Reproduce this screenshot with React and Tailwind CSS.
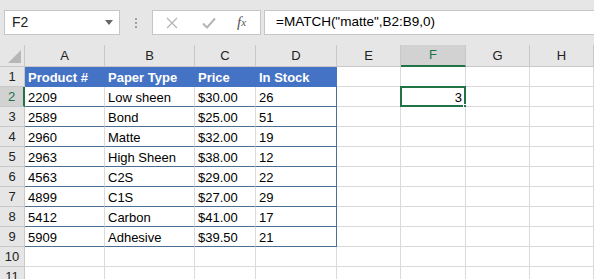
import React from 'react';

const cols = ['A', 'B', 'C', 'D', 'E', 'F', 'G', 'H'];

const data = [
  ['2209', 'Low sheen', '$30.00', '26'],
  ['2589', 'Bond', '$25.00', '51'],
  ['2960', 'Matte', '$32.00', '19'],
  ['2963', 'High Sheen', '$38.00', '12'],
  ['4563', 'C2S', '$29.00', '22'],
  ['4899', 'C1S', '$27.00', '29'],
  ['5412', 'Carbon', '$41.00', '17'],
  ['5909', 'Adhesive', '$39.50', '21'],
];

function Corner() {
  return (
    <div className="h-[22px] bg-[#e6e6e6] border-r border-b border-[#c8c8c8] relative">
      <svg className="absolute right-[3px] bottom-[3px]" width="13" height="13" viewBox="0 0 13 13">
        <polygon points="13,0 13,13 0,13" fill="#b7b7b7" />
      </svg>
    </div>
  );
}

function ColHead({ label }) {
  const active = label === 'F';
  return (
    <div
      className={
        'h-[22px] flex items-center justify-center text-[13px] border-r border-[#c8c8c8] ' +
        (active
          ? 'bg-[#d2d2d2] text-[#217346] border-b-2 border-b-[#217346]'
          : 'bg-[#e6e6e6] text-[#222] border-b border-b-[#c8c8c8]')
      }
    >
      {label}
    </div>
  );
}

function RowHead({ n }) {
  const active = n === 2;
  return (
    <div
      className={
        'h-[20px] flex items-center justify-center text-[13px] border-b border-[#c8c8c8] ' +
        (active
          ? 'bg-[#d2d2d2] text-[#217346] border-r-2 border-r-[#217346]'
          : 'bg-[#e6e6e6] text-[#222] border-r border-r-[#c8c8c8]')
      }
    >
      {n}
    </div>
  );
}

function Cell({ r, c }) {
  // r: 1..11, c: 0..7
  const inTable = r <= 9 && c <= 3;
  const isHeader = r === 1 && c <= 3;
  const selected = r === 2 && c === 5;
  let text = '';
  if (isHeader) text = ['Product #', 'Paper Type', 'Price', 'In Stock'][c];
  else if (inTable) text = data[r - 2][c];
  if (selected) text = '3';

  let cls = 'h-[20px] flex items-center px-[3px] text-[13px] relative ';
  if (isHeader) {
    cls += 'bg-[#4472c4] text-white font-bold border-b border-b-[#4472c4] border-r border-r-[#4472c4] ';
  } else if (inTable) {
    cls += 'bg-white text-black border-b border-b-[#4d6f92] ';
    cls += c === 3 ? 'border-r border-r-[#4d6f92] ' : 'border-r border-r-[#dadada] ';
  } else {
    cls += 'bg-white text-black border-b border-b-[#dadada] border-r border-r-[#dadada] ';
  }
  if (selected) cls += 'justify-end ';

  return (
    <div className={cls}>
      <span className="leading-none pt-[2px]">{text}</span>
      {selected && (
        <>
          <div className="absolute left-[-1px] top-[-1px] right-[-1px] bottom-[-1px] border-2 border-[#217346]" />
          <div className="absolute right-[-4px] bottom-[-4px] w-[6px] h-[6px] bg-[#217346] border border-white" />
        </>
      )}
    </div>
  );
}

export default function App() {
  const rows = [1, 2, 3, 4, 5, 6, 7, 8, 9, 10, 11];
  return (
    <div className="w-[594px] h-[279px] overflow-hidden bg-white" style={{ fontFamily: '"Liberation Sans", Arial, sans-serif' }}>
      {/* formula bar */}
      <div className="h-[45px] bg-[#e6e6e6] flex items-start pt-[10px] pl-[4px]">
        <div className="w-[116px] h-[25px] bg-white border border-[#c6c6c6] flex items-center justify-between pl-[7px] pr-[6px]">
          <span className="text-[14px] text-[#222]">F2</span>
          <svg width="8" height="5" viewBox="0 0 8 5">
            <polygon points="0,0 8,0 4,5" fill="#666" />
          </svg>
        </div>
        <div className="w-[32px] h-[25px] flex flex-col items-center justify-center gap-[2px]">
          <div className="w-[2px] h-[2px] bg-[#a0a0a0]" />
          <div className="w-[2px] h-[2px] bg-[#a0a0a0]" />
          <div className="w-[2px] h-[2px] bg-[#a0a0a0]" />
        </div>
        <div className="w-[109px] h-[25px] bg-white border border-[#c6c6c6] flex items-center">
          <div className="w-[35px] flex justify-center pl-[2px]">
            <svg width="12" height="12" viewBox="0 0 12 12">
              <path d="M1 1 L11 11 M11 1 L1 11" stroke="#b5b5b5" strokeWidth="1.3" />
            </svg>
          </div>
          <div className="w-[37px] flex justify-center pl-[4px]">
            <svg width="14" height="12" viewBox="0 0 14 12">
              <path d="M1 6.5 L5 10.5 L13 1.5" stroke="#b5b5b5" strokeWidth="2" fill="none" />
            </svg>
          </div>
          <div className="flex-1 flex justify-center pr-[2px] text-[#555]" style={{ fontFamily: '"Liberation Serif", serif' }}>
            <span className="italic text-[15px]">f</span>
            <span className="italic text-[11px] pt-[3px]">x</span>
          </div>
        </div>
        <div className="ml-[3px] flex-1 h-[25px] bg-white border border-[#c6c6c6] border-r-0 flex items-center pl-[11px]">
          <span className="text-[13.5px] text-black">=MATCH("matte",B2:B9,0)</span>
        </div>
      </div>

      {/* grid */}
      <div className="grid grid-cols-[25px_80px_90px_61px_81px_64px_65px_64px_64px]">
        <Corner />
        {cols.map((c) => (
          <ColHead key={c} label={c} />
        ))}
        {rows.map((r) => (
          <React.Fragment key={r}>
            <RowHead n={r} />
            {cols.map((c, i) => (
              <Cell key={c} r={r} c={i} />
            ))}
          </React.Fragment>
        ))}
      </div>
    </div>
  );
}
